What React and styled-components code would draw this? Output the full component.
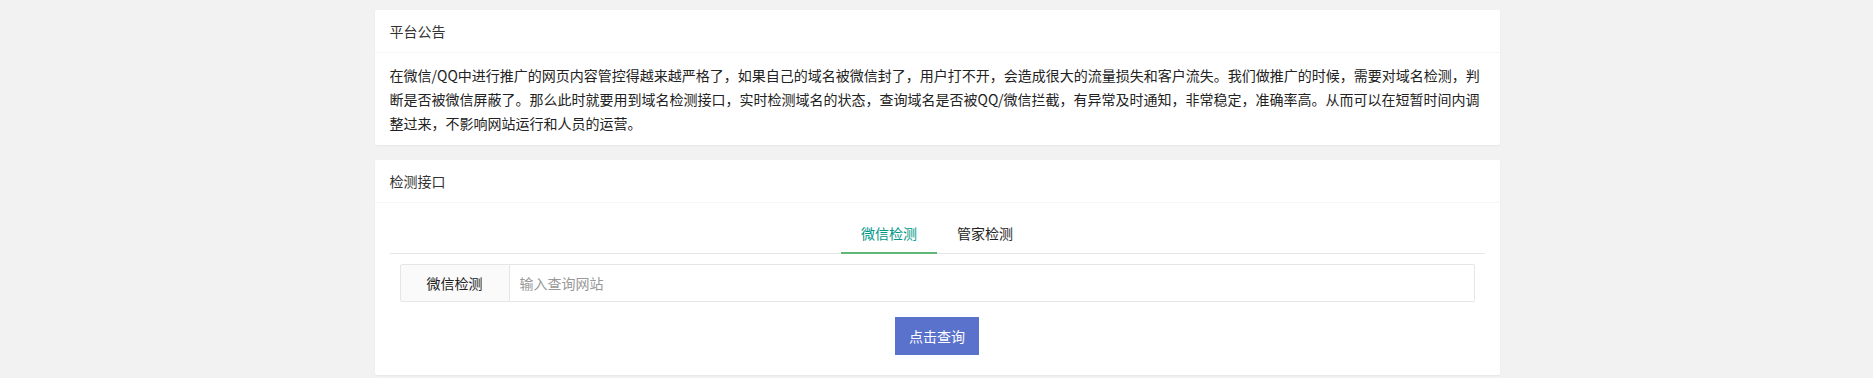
import React, { useState } from 'react';
import styled, { createGlobalStyle } from 'styled-components';

const GlobalStyle = createGlobalStyle`
  html, body {
    margin: 0;
    padding: 0;
    background: #f2f2f2;
  }
  body {
    font-family: "Noto Sans CJK SC", "Noto Sans", sans-serif;
    font-size: 14px;
    color: #333;
  }
  * {
    box-sizing: border-box;
  }
`;

const Page = styled.div`
  width: 1126px;
  margin: 0 auto;
  padding: 10px 0 3px 1px;
  display: flex;
  flex-direction: column;
  gap: 15px;
`;

const Card = styled.section`
  background: #fff;
  border-radius: 2px;
  box-shadow: 0 1px 2px 0 rgba(0, 0, 0, 0.05);
`;

const CardHeader = styled.div`
  height: 43px;
  line-height: 42px;
  padding: 0 15px;
  border-bottom: 1px solid #f6f6f6;
  color: #333;
  font-size: 14px;
`;

const CardBody = styled.div`
  padding: ${(p) => (p.$tight ? '10px 15px 0' : '10px 15px')};
  line-height: 24px;
`;

const Notice = styled.p`
  margin: 0;
  color: #222;
  line-height: 24px;
`;

const TabBar = styled.ul`
  display: flex;
  justify-content: center;
  margin: 0;
  padding: 0;
  list-style: none;
  height: 41px;
  border-bottom: 1px solid #e6e6e6;
`;

const TabItem = styled.li`
  position: relative;
  height: 40px;
  line-height: 40px;
  padding: 0 20px;
  cursor: pointer;
  color: ${(p) => (p.$active ? '#009688' : '#222')};

  &::after {
    content: '';
    display: ${(p) => (p.$active ? 'block' : 'none')};
    position: absolute;
    left: 0;
    right: 0;
    bottom: -1px;
    height: 2px;
    background: #5fb878;
  }
`;

const TabContent = styled.div`
  padding: 10px 10px 20px;
  display: flex;
  flex-direction: column;
  align-items: center;
  gap: 15px;
`;

const InputGroup = styled.div`
  display: flex;
  width: 100%;
  height: 38px;
`;

const PrefixLabel = styled.label`
  flex: 0 0 110px;
  display: flex;
  align-items: center;
  justify-content: center;
  background: #fafafa;
  border: 1px solid #e6e6e6;
  border-radius: 2px 0 0 2px;
  color: #222;
`;

const TextInput = styled.input`
  flex: 1;
  height: 38px;
  padding: 0 10px;
  border: 1px solid #e6e6e6;
  border-left: none;
  border-radius: 0 2px 2px 0;
  font: inherit;
  color: #333;
  outline: none;

  &::placeholder {
    color: #999;
  }
`;

const QueryButton = styled.button`
  height: 38px;
  padding: 0 14px;
  border: none;
  border-radius: 0;
  background: #5a72cb;
  color: #fff;
  font: inherit;
  cursor: pointer;
`;

const tabs = ['微信检测', '管家检测'];

const App = () => {
  const [active, setActive] = useState(0);

  return (
    <>
      <GlobalStyle />
      <Page>
        <Card>
          <CardHeader>平台公告</CardHeader>
          <CardBody>
            <Notice>
              在微信/QQ中进行推广的网页内容管控得越来越严格了，如果自己的域名被微信封了，用户打不开，会造成很大的流量损失和客户流失。我们做推广的时候，需要对域名检测，判断是否被微信屏蔽了。那么此时就要用到域名检测接口，实时检测域名的状态，查询域名是否被QQ/微信拦截，有异常及时通知，非常稳定，准确率高。从而可以在短暂时间内调整过来，不影响网站运行和人员的运营。
            </Notice>
          </CardBody>
        </Card>

        <Card>
          <CardHeader>检测接口</CardHeader>
          <CardBody $tight>
            <TabBar>
              {tabs.map((t, i) => (
                <TabItem key={t} $active={i === active} onClick={() => setActive(i)}>
                  {t}
                </TabItem>
              ))}
            </TabBar>
            <TabContent>
              <InputGroup>
                <PrefixLabel>{tabs[active]}</PrefixLabel>
                <TextInput placeholder="输入查询网站" />
              </InputGroup>
              <QueryButton>点击查询</QueryButton>
            </TabContent>
          </CardBody>
        </Card>
      </Page>
    </>
  );
};

export default App;
